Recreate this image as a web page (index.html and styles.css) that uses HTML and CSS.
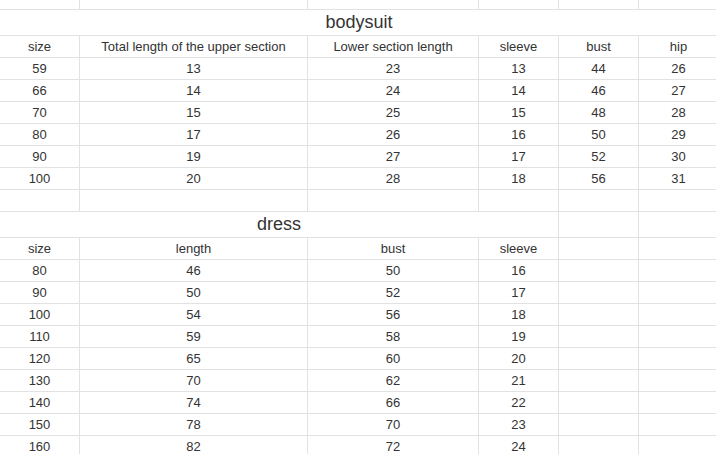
FILE: index.html
```html
<!DOCTYPE html>
<html>
<head>
<meta charset="utf-8">
<link rel="stylesheet" href="styles.css">
</head>
<body>
<div class="sheet">
  <div class="c"></div><div class="c"></div><div class="c"></div><div class="c"></div><div class="c"></div><div class="c"></div>

  <div class="c title span6">bodysuit</div>

  <div class="c">size</div><div class="c">Total length of the upper section</div><div class="c">Lower section length</div><div class="c">sleeve</div><div class="c">bust</div><div class="c">hip</div>
  <div class="c">59</div><div class="c">13</div><div class="c">23</div><div class="c">13</div><div class="c">44</div><div class="c">26</div>
  <div class="c">66</div><div class="c">14</div><div class="c">24</div><div class="c">14</div><div class="c">46</div><div class="c">27</div>
  <div class="c">70</div><div class="c">15</div><div class="c">25</div><div class="c">15</div><div class="c">48</div><div class="c">28</div>
  <div class="c">80</div><div class="c">17</div><div class="c">26</div><div class="c">16</div><div class="c">50</div><div class="c">29</div>
  <div class="c">90</div><div class="c">19</div><div class="c">27</div><div class="c">17</div><div class="c">52</div><div class="c">30</div>
  <div class="c">100</div><div class="c">20</div><div class="c">28</div><div class="c">18</div><div class="c">56</div><div class="c">31</div>

  <div class="c"></div><div class="c"></div><div class="c"></div><div class="c"></div><div class="c"></div><div class="c"></div>

  <div class="c title span4">dress</div><div class="c"></div><div class="c"></div>

  <div class="c">size</div><div class="c">length</div><div class="c">bust</div><div class="c">sleeve</div><div class="c"></div><div class="c"></div>
  <div class="c">80</div><div class="c">46</div><div class="c">50</div><div class="c">16</div><div class="c"></div><div class="c"></div>
  <div class="c">90</div><div class="c">50</div><div class="c">52</div><div class="c">17</div><div class="c"></div><div class="c"></div>
  <div class="c">100</div><div class="c">54</div><div class="c">56</div><div class="c">18</div><div class="c"></div><div class="c"></div>
  <div class="c">110</div><div class="c">59</div><div class="c">58</div><div class="c">19</div><div class="c"></div><div class="c"></div>
  <div class="c">120</div><div class="c">65</div><div class="c">60</div><div class="c">20</div><div class="c"></div><div class="c"></div>
  <div class="c">130</div><div class="c">70</div><div class="c">62</div><div class="c">21</div><div class="c"></div><div class="c"></div>
  <div class="c">140</div><div class="c">74</div><div class="c">66</div><div class="c">22</div><div class="c"></div><div class="c"></div>
  <div class="c">150</div><div class="c">78</div><div class="c">70</div><div class="c">23</div><div class="c"></div><div class="c"></div>
  <div class="c">160</div><div class="c">82</div><div class="c">72</div><div class="c">24</div><div class="c"></div><div class="c"></div>
</div>
</body>
</html>
```

FILE: styles.css
```css
html, body {
  margin: 0;
  padding: 0;
  background: #ffffff;
  overflow: hidden;
}

.sheet {
  display: grid;
  grid-template-columns: 79px 227px 170px 79px 79px 79px;
  grid-template-rows: 9px 25px repeat(8, 21px) 25px repeat(10, 21px);
  gap: 1px;
  background: #e2e2e2;
  width: 718px;
  font-family: "Liberation Sans", Arial, sans-serif;
  font-size: 13px;
  color: #333333;
}

.c {
  background: #ffffff;
  display: flex;
  align-items: center;
  justify-content: center;
  white-space: nowrap;
  overflow: hidden;
}

.title {
  font-size: 18px;
}

.span6 {
  grid-column: span 6;
}

.span4 {
  grid-column: span 4;
}
```
